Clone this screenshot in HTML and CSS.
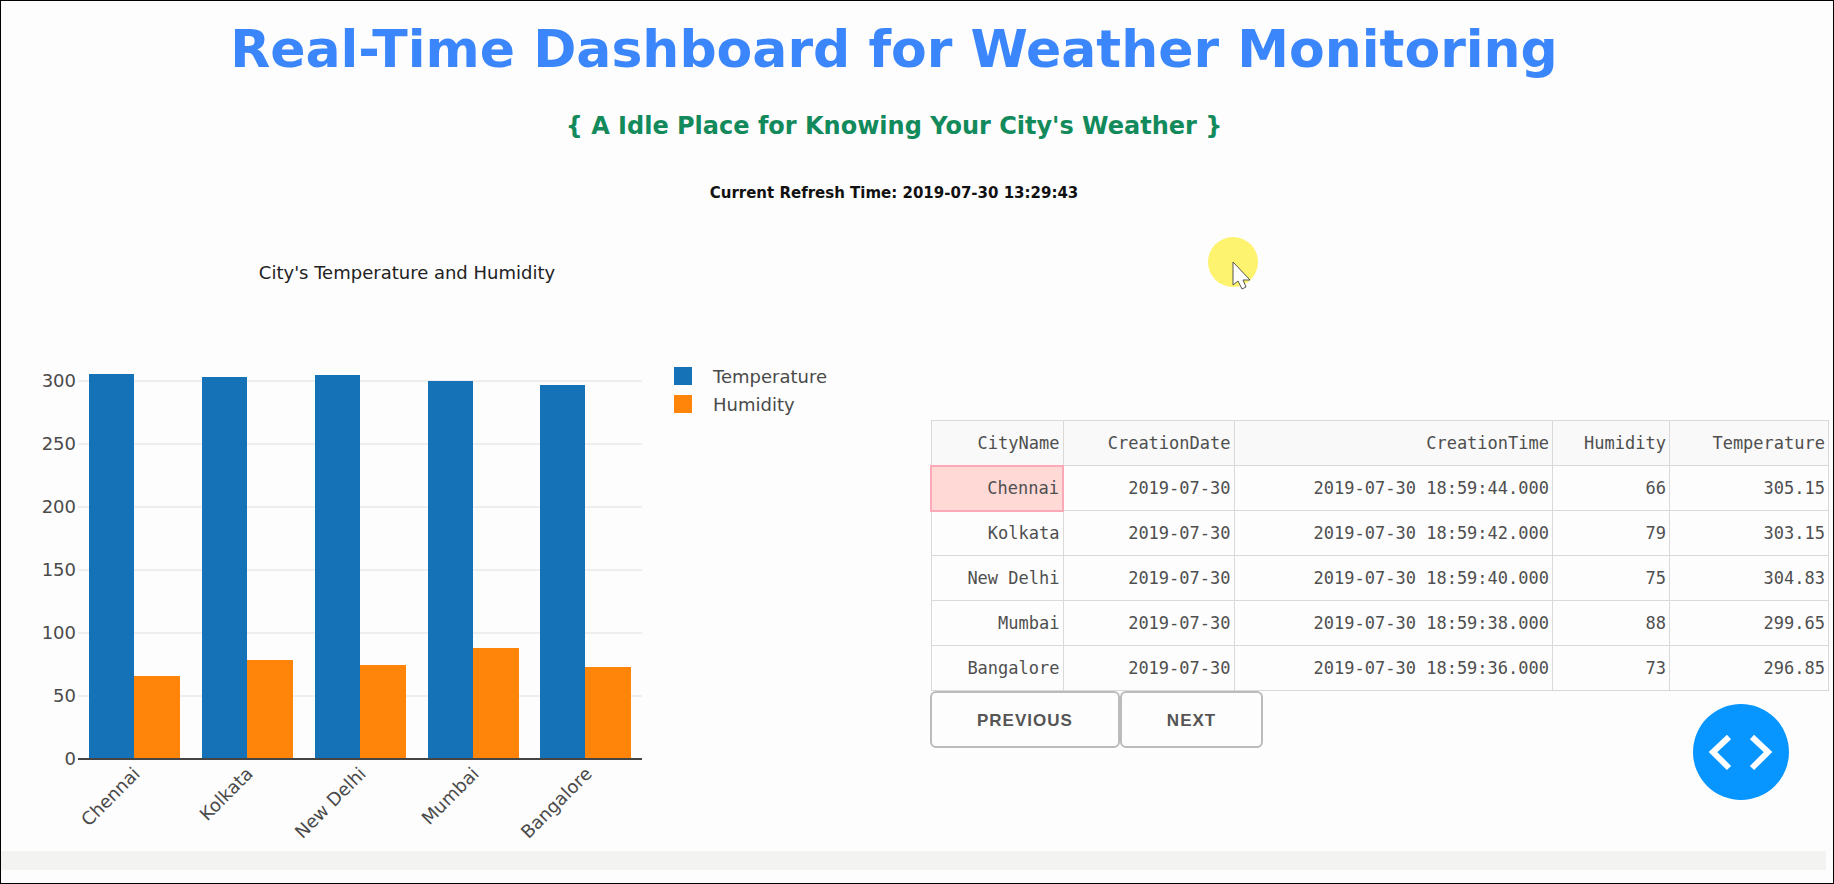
FILE: index.html
```html
<!DOCTYPE html>
<html lang="en">
<head>
<meta charset="utf-8">
<title>Real-Time Dashboard for Weather Monitoring</title>
<link rel="stylesheet" href="styles.css">
</head>
<body>
<div class="page">
  <header class="header">
    <h1 class="title">Real-Time Dashboard for Weather Monitoring</h1>
    <h2 class="subtitle">{ A Idle Place for Knowing Your City's Weather }</h2>
    <p class="refresh">Current Refresh Time: 2019-07-30 13:29:43</p>
  </header>
  <main class="dashboard">
    <section class="chart">
      <svg class="chart-svg" viewBox="0 0 916 641" role="img" aria-label="City's Temperature and Humidity">
        <text class="chart-title" x="406" y="69">City's Temperature and Humidity</text>
        <g transform="translate(77 170)">
          <g class="grid">
            <path d="M0 1H564M0 64H564M0 127H564M0 190H564M0 253H564M0 316H564"/>
          </g>
          <g class="temperature">
            <rect x="11" y="-6" width="45" height="385"/>
            <rect x="124" y="-3" width="45" height="382"/>
            <rect x="237" y="-5" width="45" height="384"/>
            <rect x="350" y="1" width="45" height="378"/>
            <rect x="462" y="5" width="45" height="374"/>
          </g>
          <g class="humidity">
            <rect x="56" y="296" width="46" height="83"/>
            <rect x="169" y="280" width="46" height="99"/>
            <rect x="282" y="285" width="46" height="94"/>
            <rect x="395" y="268" width="46" height="111"/>
            <rect x="507" y="287" width="46" height="92"/>
          </g>
          <path class="axis" d="M0 379H564"/>
          <g class="y-labels">
            <text x="-2" y="7">300</text>
            <text x="-2" y="70">250</text>
            <text x="-2" y="133">200</text>
            <text x="-2" y="196">150</text>
            <text x="-2" y="259">100</text>
            <text x="-2" y="322">50</text>
            <text x="-2" y="385">0</text>
          </g>
          <g class="x-labels">
            <text transform="translate(63 395) rotate(-45)">Chennai</text>
            <text transform="translate(176 395) rotate(-45)">Kolkata</text>
            <text transform="translate(289 395) rotate(-45)">New Delhi</text>
            <text transform="translate(402 395) rotate(-45)">Mumbai</text>
            <text transform="translate(515 395) rotate(-45)">Bangalore</text>
          </g>
        </g>
        <g class="legend" transform="translate(673 157)">
          <rect class="temperature" y="0" width="18" height="18"/>
          <text x="39" y="16">Temperature</text>
          <rect class="humidity" y="28" width="18" height="18"/>
          <text x="39" y="44">Humidity</text>
        </g>
      </svg>
    </section>
    <section class="readings">
      <table class="table">
        <colgroup><col class="col-city"><col class="col-date"><col><col class="col-humidity"><col class="col-temperature"></colgroup>
        <thead>
          <tr><th>CityName</th><th>CreationDate</th><th>CreationTime</th><th>Humidity</th><th>Temperature</th></tr>
        </thead>
        <tbody>
          <tr><td class="selected">Chennai</td><td>2019-07-30</td><td>2019-07-30 18:59:44.000</td><td>66</td><td>305.15</td></tr>
          <tr><td>Kolkata</td><td>2019-07-30</td><td>2019-07-30 18:59:42.000</td><td>79</td><td>303.15</td></tr>
          <tr><td>New Delhi</td><td>2019-07-30</td><td>2019-07-30 18:59:40.000</td><td>75</td><td>304.83</td></tr>
          <tr><td>Mumbai</td><td>2019-07-30</td><td>2019-07-30 18:59:38.000</td><td>88</td><td>299.65</td></tr>
          <tr><td>Bangalore</td><td>2019-07-30</td><td>2019-07-30 18:59:36.000</td><td>73</td><td>296.85</td></tr>
        </tbody>
      </table>
      <div class="pager">
        <button class="pager-button" type="button">Previous</button>
        <button class="pager-button" type="button">Next</button>
      </div>
    </section>
  </main>
  <div class="scroll-track"></div>
  <button class="debug-button" type="button" aria-label="Developer tools">
    <svg viewBox="0 0 96 96" aria-hidden="true"><path d="M36 33 20 48 36 64M59 33 75 48 59 64"/></svg>
  </button>
  <svg class="pointer" viewBox="0 0 50 56" aria-hidden="true">
    <circle cx="25" cy="25" r="25"/>
    <path d="M25 25V48L30 44L34 52L38 50L35 43H42Z"/>
  </svg>
</div>
</body>
</html>
```
FILE: styles.css
```css
* {
  box-sizing: border-box;
}

body {
  margin: 0;
  background: #fdfdfd;
  font-family: "DejaVu Sans", Verdana, sans-serif;
  color: #4f4f4f;
}

.page {
  position: relative;
  min-height: 100vh;
  border: 1px solid #000;
}

.header {
  padding: 16px 46px 8px 0;
  text-align: center;
}

.title {
  margin: 0;
  font-size: 52px;
  line-height: 64px;
  color: #3b86fb;
}

.subtitle {
  margin: 30px 0 43px;
  font-size: 24px;
  line-height: 30px;
  color: #128a5b;
}

.refresh {
  margin: 0;
  font-size: 15px;
  font-weight: bold;
  line-height: 18px;
  color: #111;
}

.dashboard {
  display: grid;
  grid-template-columns: 1fr 1fr;
}

.chart-svg {
  display: block;
  width: 100%;
  font-size: 18px;
  fill: #4a4a4a;
}

.chart-title {
  fill: #222;
  text-anchor: middle;
}

.grid path {
  stroke: #eee;
  stroke-width: 2;
}

.temperature {
  fill: #1672b7;
}

.humidity {
  fill: #ff850a;
}

.axis {
  stroke: #444;
  stroke-width: 2;
}

.y-labels,
.x-labels {
  text-anchor: end;
}

.readings {
  padding: 210px 4px 0 13px;
}

.table {
  width: 100%;
  table-layout: fixed;
  border-collapse: collapse;
  font-family: "DejaVu Sans Mono", monospace;
  font-size: 17px;
  line-height: 20px;
}

.col-city { width: 132px; }
.col-date { width: 171px; }
.col-humidity { width: 117px; }
.col-temperature { width: 159px; }

.table th,
.table td {
  height: 45px;
  padding: 0 3px;
  border: 1px solid #d9d9d9;
  font-weight: normal;
  text-align: right;
  white-space: nowrap;
}

.table th {
  background: #f8f9f8;
}

.table .selected {
  background: #ffd9d6;
  border: 2px solid #fba9b8;
}

.pager {
  display: flex;
}

.pager-button {
  height: 57px;
  padding: 2px 45px 0;
  border: 2px solid #bbb;
  border-radius: 6px;
  background: transparent;
  font-family: "Liberation Sans", Arial, sans-serif;
  font-size: 17px;
  font-weight: bold;
  letter-spacing: 1px;
  text-transform: uppercase;
  color: #555;
}

.scroll-track {
  height: 19px;
  margin-right: 7px;
  background: #f3f3f1;
}

.debug-button {
  position: fixed;
  right: 45px;
  bottom: 84px;
  width: 96px;
  height: 96px;
  padding: 0;
  border: 0;
  border-radius: 50%;
  background: #0795ff;
}

.debug-button svg {
  display: block;
  fill: none;
  stroke: #fff;
  stroke-width: 6;
}

.pointer {
  position: absolute;
  top: 236px;
  left: 1207px;
  width: 50px;
  height: 56px;
}

.pointer circle {
  fill: #fdf36f;
}

.pointer path {
  fill: #fff;
  stroke: #555;
  stroke-width: 1;
}
```
